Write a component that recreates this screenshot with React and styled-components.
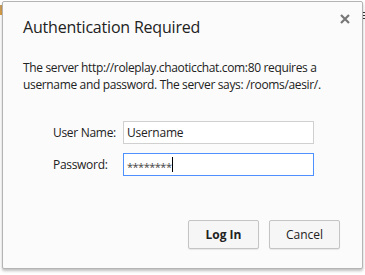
import React from 'react';
import styled, { createGlobalStyle } from 'styled-components';

const Global = createGlobalStyle`
    html, body {
        margin: 0;
        padding: 0;
        background: #ffffff;
        font-family: "Open Sans", "Noto Sans", sans-serif;
    }
`;

const Page = styled.div`
    position: relative;
    width: 365px;
    height: 275px;
    overflow: hidden;
    padding: 1px 2px 0 2px;
    box-sizing: border-box;
`;

const PeekLeft = styled.div`
    position: absolute;
    left: 0;
    top: 5px;
    width: 2px;
    height: 10px;
    background: linear-gradient(#c8a060, #e0a040);
`;

const PeekRight = styled.div`
    position: absolute;
    right: 0;
    top: 12px;
    width: 2px;
    height: 8px;
    background: repeating-linear-gradient(#333 0 1px, transparent 1px 3px);
`;

const Dialog = styled.div`
    position: relative;
    width: 361px;
    height: 268px;
    box-sizing: border-box;
    background: #fbfbfb;
    border: 1px solid #b4b4b4;
    border-radius: 2px;
    box-shadow: 0 2px 3px rgba(0, 0, 0, 0.25);
    padding: 14px 20px 0 20px;
    display: flex;
    flex-direction: column;
    color: #222;
`;

const Title = styled.h1`
    margin: 0;
    font-size: 16px;
    font-weight: 400;
    letter-spacing: -0.2px;
    color: #222;
    line-height: 22px;
`;

const Close = styled.div`
    position: absolute;
    top: 10px;
    right: 10px;
    width: 14px;
    height: 14px;
    display: flex;
    align-items: center;
    justify-content: center;
`;

const Message = styled.p`
    margin: 21px 0 0 0;
    font-size: 12px;
    line-height: 17px;
    letter-spacing: -0.35px;
    color: #222;
`;

const Form = styled.div`
    display: grid;
    grid-template-columns: 70px 191px;
    row-gap: 9px;
    align-items: center;
    margin: 28px 0 0 30px;
`;

const Label = styled.label`
    font-size: 12px;
    color: #222;
    letter-spacing: -0.3px;
`;

const Input = styled.div`
    height: 23px;
    box-sizing: border-box;
    background: #fff;
    border: 1px solid ${(p) => (p.$focused ? '#4d90fe' : '#d0d0d0')};
    font-size: 12px;
    display: flex;
    align-items: center;
    padding-left: 3px;
    color: #222;
    letter-spacing: -0.2px;
`;

const Caret = styled.span`
    display: inline-block;
    width: 1px;
    height: 15px;
    background: #000;
    margin-left: 1px;
`;

const Stars = styled.span`
    color: #444;
    font-size: 11px;
    letter-spacing: -0.5px;
    padding-top: 3px;
`;

const Buttons = styled.div`
    display: flex;
    justify-content: flex-end;
    gap: 10px;
    margin-top: 44px;
    padding-right: 2px;
`;

const Button = styled.button`
    width: 71px;
    height: 29px;
    box-sizing: border-box;
    border: 1px solid #c4c4c4;
    border-radius: 2px;
    background: #f6f6f6;
    box-shadow: 0 1px 1px rgba(0, 0, 0, 0.08);
    font-family: "Open Sans", "Noto Sans", sans-serif;
    font-size: 12px;
    font-weight: ${(p) => (p.$primary ? 700 : 400)};
    color: #222;
    padding: 0;
`;

export default () => {
    return (
        <Page>
            <Global />
            <PeekLeft />
            <PeekRight />
            <Dialog>
                <Title>Authentication Required</Title>
                <Close>
                    <svg width="10" height="10" viewBox="0 0 10 10">
                        <path d="M1 1 L9 9 M9 1 L1 9" stroke="#777" strokeWidth="2.2" />
                    </svg>
                </Close>
                <Message>
                    The server http://roleplay.chaoticchat.com:80 requires a username and password. The server says: /rooms/aesir/.
                </Message>
                <Form>
                    <Label>User Name:</Label>
                    <Input>Username</Input>
                    <Label>Password:</Label>
                    <Input $focused>
                        <Stars>********</Stars>
                        <Caret />
                    </Input>
                </Form>
                <Buttons>
                    <Button $primary>Log In</Button>
                    <Button>Cancel</Button>
                </Buttons>
            </Dialog>
        </Page>
    );
};
